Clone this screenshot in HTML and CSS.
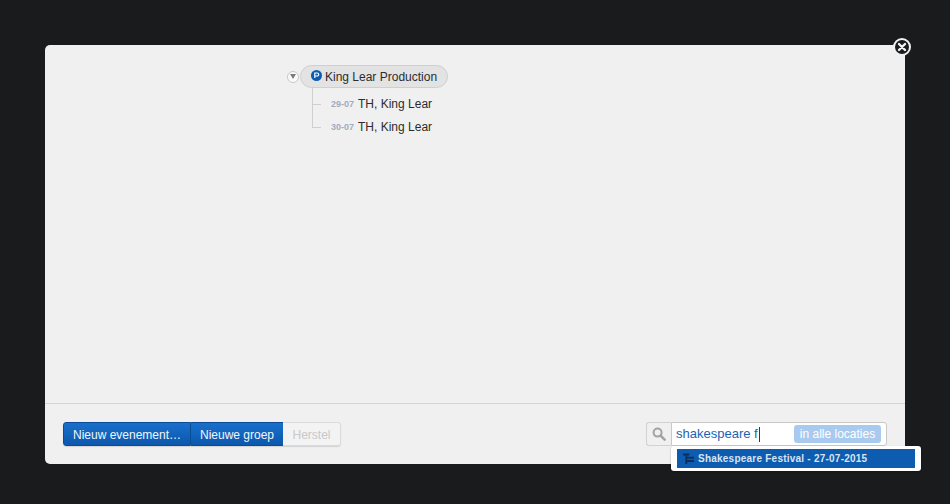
FILE: index.html
```html
<!DOCTYPE html>
<html lang="nl">
<head>
<meta charset="utf-8">
<title>King Lear Production</title>
<link rel="stylesheet" href="styles.css">
</head>
<body>
<div class="modal">
  <button class="close" aria-label="Sluiten">
    <svg width="20" height="20" viewBox="0 0 20 20"><circle cx="10" cy="10" r="8" fill="#1a1b1c" stroke="#f2f2f2" stroke-width="2"/><path d="M7 7l6 6M13 7l-6 6" stroke="#f2f2f2" stroke-width="2.4" stroke-linecap="round"/></svg>
  </button>
  <main class="canvas">
    <div class="tree">
      <div class="root">
        <span class="toggle"><svg width="6" height="5" viewBox="0 0 6 5"><path d="M0 0h6L3 5z" fill="#7b7b7b"/></svg></span>
        <div class="pill">
          <svg class="p-icon" width="11" height="11" viewBox="0 0 11 11"><circle cx="5.5" cy="5.5" r="5.5" fill="#0d5cb0"/><path d="M3.8 8V3h2.4a1.4 1.4 0 0 1 0 3H4" fill="none" stroke="#fff" stroke-width="1.2"/></svg>
          <span class="pill-label">King Lear Production</span>
        </div>
      </div>
      <ul class="children">
        <li class="child"><span class="date">29-07</span><span class="name">TH, King Lear</span></li>
        <li class="child"><span class="date">30-07</span><span class="name">TH, King Lear</span></li>
      </ul>
    </div>
  </main>
  <footer class="footer">
    <div class="btn-group">
      <button class="btn primary first">Nieuw evenement…</button>
      <button class="btn primary second">Nieuwe groep</button>
      <button class="btn disabled">Herstel</button>
    </div>
    <div class="search">
      <span class="search-icon"><svg width="14" height="14" viewBox="0 0 14 14"><circle cx="5.6" cy="5.6" r="4" fill="none" stroke="#a3a3a3" stroke-width="2"/><path d="M8.6 8.6l4 4" stroke="#a3a3a3" stroke-width="2.6" stroke-linecap="round"/></svg></span>
      <div class="search-input">
        <span class="query">shakespeare f</span><span class="caret"></span>
        <span class="scope">in alle locaties</span>
      </div>
      <div class="dropdown">
        <div class="option">
          <svg width="11" height="11" viewBox="0 0 12 12"><path d="M0 0.5h7v2.2H4.6V4H12v2.2H4.6v1.3H12v2.2H4.6V12H2.6V2.7H0z" fill="#0c2f5f"/></svg>
          <span class="option-label">Shakespeare Festival - 27-07-2015</span>
        </div>
      </div>
    </div>
  </footer>
</div>
</body>
</html>
```
FILE: styles.css
```css
* { box-sizing: border-box; }
html, body { height: 100%; }
body {
  margin: 0;
  padding: 45px 45px 40px;
  background: #1a1b1c;
  font-family: "Liberation Sans", Arial, sans-serif;
  overflow: hidden;
}
button { font-family: inherit; margin: 0; }
.modal {
  position: relative;
  height: 419px;
  background: #f0f0f0;
  border-radius: 5px;
  display: flex;
  flex-direction: column;
}
.close {
  position: absolute;
  top: -8px;
  right: -7px;
  width: 20px;
  height: 20px;
  padding: 0;
  border: 0;
  background: none;
  display: block;
}
.close svg { display: block; }
.canvas { flex: 1; padding: 20px 0 0 242px; }
.root { display: flex; align-items: center; }
.toggle {
  width: 12px;
  height: 12px;
  margin: 0 1px 0 0;
  border-radius: 50%;
  background: #fafafa;
  border: 1px solid #c8c8c8;
  display: flex;
  align-items: center;
  justify-content: center;
}
.pill {
  width: 148px;
  height: 23px;
  display: flex;
  align-items: center;
  padding-left: 10px;
  gap: 3px;
  background: #e3e3e3;
  border: 1px solid #cfcfcf;
  border-radius: 12px;
}
.p-icon { margin-top: -3px; }
.pill-label { font-size: 12px; color: #2c2c2c; }
.children { list-style: none; margin: 4px 0 0 25px; padding: 0; }
.child {
  position: relative;
  height: 23px;
  padding-left: 19px;
  display: flex;
  align-items: center;
  gap: 4px;
}
.child::before {
  content: "";
  position: absolute;
  left: 0;
  top: -4px;
  width: 8px;
  height: 16px;
  border-left: 1px solid #cfcfcf;
  border-bottom: 1px solid #cfcfcf;
}
.child + .child::before { top: -12px; height: 24px; }
.date { font-size: 9px; font-weight: bold; color: #a3acbe; }
.name { font-size: 12px; color: #2c2c2c; }
.footer {
  height: 61px;
  border-top: 1px solid #d5d5d5;
  padding: 18px 18px 0;
  display: flex;
  justify-content: space-between;
  align-items: flex-start;
}
.btn-group {
  display: flex;
  height: 24px;
  border-radius: 3px;
  box-shadow: 0 1px 1px rgba(0,0,0,.12);
}
.btn {
  height: 24px;
  font-size: 12px;
  padding: 1px 0 0;
  border: 1px solid transparent;
}
.primary {
  color: #f2f6fb;
  background: linear-gradient(#1a6fcb, #0c58ac);
  border-color: #0b4c96;
}
.first { width: 128px; border-radius: 3px 0 0 3px; border-right: 1px solid #0b4c96; }
.second { width: 92px; border-left: 0; border-right: 0; }
.disabled {
  width: 58px;
  color: #c8c8c8;
  background: #f3f3f3;
  border-color: #dadada;
  border-left: 0;
  border-radius: 0 3px 3px 0;
}
.search { position: relative; display: flex; height: 24px; }
.search-icon {
  width: 25px;
  height: 24px;
  background: #f0f0f0;
  border: 1px solid #d2d2d2;
  border-right: 0;
  border-radius: 3px 0 0 3px;
  display: flex;
  align-items: center;
  justify-content: center;
}
.search-input {
  width: 216px;
  height: 24px;
  background: #fff;
  border: 1px solid #c8c8c8;
  border-radius: 0 3px 3px 0;
  display: flex;
  align-items: center;
  padding: 0 5px 0 4px;
}
.query { font-size: 13px; color: #1d62b3; margin-top: -2px; }
.caret { width: 1px; height: 15px; background: #0d3e78; margin-left: 1px; }
.scope {
  margin-left: auto;
  height: 18px;
  width: 87px;
  background: #a9caef;
  color: #fff;
  font-size: 12px;
  border-radius: 3px;
  display: flex;
  align-items: center;
  justify-content: center;
}
.dropdown {
  position: absolute;
  top: 24px;
  left: 25px;
  width: 250px;
  height: 25px;
  background: #fff;
  border-radius: 3px;
  padding: 3px 6px;
  box-shadow: 0 1px 2px rgba(0,0,0,.3);
}
.option {
  height: 19px;
  background: #0d5cb0;
  display: flex;
  align-items: center;
  padding-left: 6px;
  gap: 4px;
}
.option svg { flex: none; }
.option-label { font-size: 10px; font-weight: bold; color: #d9e4f2; letter-spacing: 0.23px; }
```
